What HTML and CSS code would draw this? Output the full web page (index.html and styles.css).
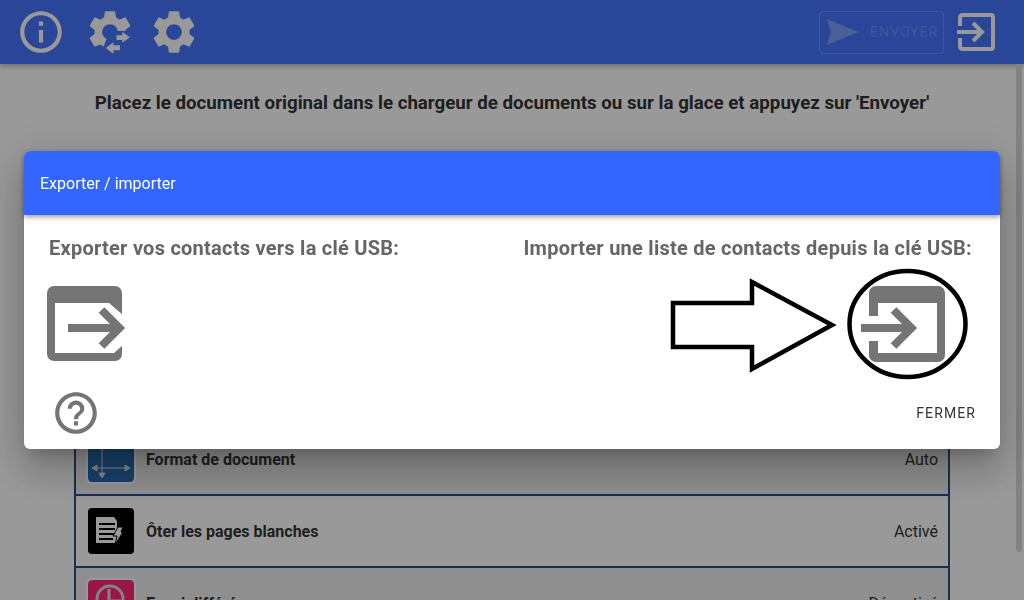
FILE: index.html
```html
<!DOCTYPE html>
<html lang="fr">
<head>
    <meta charset="UTF-8">
    <meta name="viewport" content="width=device-width, initial-scale=1.0">
    <title>Exporter / importer</title>
    <link rel="stylesheet" href="styles.css">
</head>
<body>
    <div class="app-header">
        <svg class="info-icon" viewBox="0 0 24 24"><path d="M11 7h2v2h-2zm0 4h2v6h-2zm1-9C6.48 2 2 6.48 2 12s4.48 10 10 10 10-4.48 10-10S17.52 2 12 2zm0 18c-4.41 0-8-3.59-8-8s3.59-8 8-8 8 3.59 8 8-3.59 8-8 8z"/></svg>
        <svg class="gear-icon" viewBox="84 6 52 52">
            <path transform="translate(84 6) scale(2.167)" d="M19.14 12.94c.04-.3.06-.61.06-.94 0-.32-.02-.64-.07-.94l2.03-1.58c.18-.14.23-.41.12-.61l-1.92-3.32c-.12-.22-.37-.29-.59-.22l-2.39.96c-.5-.38-1.03-.7-1.62-.94l-.36-2.54c-.04-.24-.24-.41-.48-.41h-3.84c-.24 0-.43.17-.47.41l-.36 2.54c-.59.24-1.13.57-1.62.94l-2.39-.96c-.22-.08-.47 0-.59.22L2.74 8.87c-.12.21-.08.47.12.61l2.03 1.58c-.05.3-.09.63-.09.94s.02.64.07.94l-2.03 1.58c-.18.14-.23.41-.12.61l1.92 3.32c.12.22.37.29.59.22l2.39-.96c.5.38 1.03.7 1.62.94l.36 2.54c.05.24.24.41.48.41h3.84c.24 0 .44-.17.47-.41l.36-2.54c.59-.24 1.13-.56 1.62-.94l2.39.96c.22.08.47 0 .59-.22l1.92-3.32c.12-.22.07-.47-.12-.61l-2.01-1.58zM12 15.6c-1.98 0-3.6-1.62-3.6-3.6s1.62-3.6 3.6-3.6 3.6 1.62 3.6 3.6-1.62 3.6-3.6 3.6z"/>
            <polygon class="gear-cut" points="106,40 116,31 136,31 136,58 104,58 104,46"/>
            <polygon class="swap-arrow" points="130,37.300 122.300,32 122.300,35.300 116.500,35.300 116.500,40 122.300,40 122.300,42.700"/>
            <polygon class="swap-arrow" points="105.700,48 113.300,42.300 113.300,45.300 120,45.300 120,50.300 113.300,50.300 113.300,53.700"/>
        </svg>
        <svg class="gear-icon" viewBox="0 0 24 24"><path d="M19.14 12.94c.04-.3.06-.61.06-.94 0-.32-.02-.64-.07-.94l2.03-1.58c.18-.14.23-.41.12-.61l-1.92-3.32c-.12-.22-.37-.29-.59-.22l-2.39.96c-.5-.38-1.03-.7-1.62-.94l-.36-2.54c-.04-.24-.24-.41-.48-.41h-3.84c-.24 0-.43.17-.47.41l-.36 2.54c-.59.24-1.13.57-1.62.94l-2.39-.96c-.22-.08-.47 0-.59.22L2.74 8.87c-.12.21-.08.47.12.61l2.03 1.58c-.05.3-.09.63-.09.94s.02.64.07.94l-2.03 1.58c-.18.14-.23.41-.12.61l1.92 3.32c.12.22.37.29.59.22l2.39-.96c.5.38 1.03.7 1.62.94l.36 2.54c.05.24.24.41.48.41h3.84c.24 0 .44-.17.47-.41l.36-2.54c.59-.24 1.13-.56 1.62-.94l2.39.96c.22.08.47 0 .59-.22l1.92-3.32c.12-.22.07-.47-.12-.61l-2.01-1.58zM12 15.6c-1.98 0-3.6-1.62-3.6-3.6s1.62-3.6 3.6-3.6 3.6 1.62 3.6 3.6-1.62 3.6-3.6 3.6z"/></svg>

        <div class="send-button">
            <svg class="send-icon" viewBox="0 0 31 26"><polygon points="0,0 31,13 0,26 4,13"/></svg>
            <span>ENVOYER</span>
        </div>
        <svg class="exit-icon" viewBox="0 0 38 38">
            <path d="M3 13V4.500A2.500 2.500 0 0 1 5.500 2H34.500A2 2 0 0 1 36 4V34A2 2 0 0 1 34.500 36H5.500A2.500 2.500 0 0 1 3 33.500V25"/>
            <path d="M0 19H25M16 10l9 9-9 9"/>
        </svg>
    </div>

    <p class="message">Placez le document original dans le chargeur de documents ou sur la glace et appuyez sur 'Envoyer'</p>

    <div class="settings-list">
        <div class="settings-row">
            <div class="row-icon icon-blue">
                <svg viewBox="0 0 46 46">
                    <path d="M4 32H42M14 5V42M4 32l5-3v6zM42 32l-5-3v6zM14 42l-3-5h6z"/>
                </svg>
            </div>
            <span class="row-label">Format de document</span>
            <span class="row-value">Auto</span>
        </div>
        <div class="settings-row">
            <div class="row-icon icon-black">
                <svg viewBox="0 0 46 46">
                    <polygon class="doc-sheet" points="8,9 26,9 29,13 29,35 8,35"/>
                    <path class="doc-lines" d="M11 16H27M11 21H27M11 26H27M11 31H25"/>
                    <polygon class="doc-bolt" points="30,19 35,19 33,24 35,24 27,37 29,28 25,28"/>
                </svg>
            </div>
            <span class="row-label">Ôter les pages blanches</span>
            <span class="row-value">Activé</span>
        </div>
        <div class="settings-row">
            <div class="row-icon icon-pink">
                <svg viewBox="0 0 46 46">
                    <circle cx="22" cy="19" r="13"/>
                    <path d="M21 9V21H33"/>
                </svg>
            </div>
            <span class="row-label">Envoi différé</span>
            <span class="row-value">Désactivé</span>
        </div>
    </div>

    <div class="scroll-thumb"></div>

    <!-- Export / import dialog -->
    <div class="overlay">
        <div class="dialog">
            <div class="dialog-header">Exporter / importer</div>
            <div class="dialog-titles">
                <span>Exporter vos contacts vers la clé USB:</span>
                <span>Importer une liste de contacts depuis la clé USB:</span>
            </div>
            <div class="dialog-icons">
                <svg class="export-icon" viewBox="0 0 80 76">
                    <rect x="0" y="0" width="75" height="75" rx="7"/>
                    <polygon class="cut" points="8,17 62,17 76,29 76,59 67,67 8,67"/>
                    <path class="arrow" d="M21 42H72M54.500 24l18 18-18 18"/>
                </svg>
                <svg class="import-icon" viewBox="0 0 85 76">
                    <rect x="8" y="0" width="76" height="76" rx="7"/>
                    <rect class="cut" x="17" y="17" width="59" height="50"/>
                    <rect class="cut" x="6" y="30" width="12" height="25"/>
                    <path class="arrow" d="M0 42H50M32.500 24l18 18-18 18"/>
                </svg>
            </div>
            <div class="dialog-footer">
                <svg class="help-icon" viewBox="0 0 24 24"><path d="M11 18h2v-2h-2v2zm1-16C6.480 2 2 6.480 2 12s4.480 10 10 10 10-4.480 10-10S17.520 2 12 2zm0 18c-4.410 0-8-3.590-8-8s3.590-8 8-8 8 3.590 8 8-3.590 8-8 8zm0-14c-2.210 0-4 1.790-4 4h2c0-1.100.9-2 2-2s2 .9 2 2c0 2-3 1.750-3 5h2c0-2.250 3-2.500 3-5 0-2.210-1.790-4-4-4z"/></svg>
                <span class="close-button">FERMER</span>
            </div>
            <!-- hand drawn arrow and circle on top of the dialog -->
            <svg class="annotation" viewBox="0 0 976 298">
                <polygon points="649,152 728,152 728,131 808,174 728,218 728,196 649,196"/>
                <ellipse cx="883.500" cy="173" rx="58" ry="53"/>
            </svg>
        </div>
    </div>
</body>
</html>
```

FILE: styles.css
```css
body {
    font-family: Roboto, "Liberation Sans", sans-serif;
    background-color: #fff;
    color: #333;
    margin: 0;
    height: 600px;
    overflow: hidden;
}

/* Top bar */
.app-header {
    display: flex;
    align-items: center;
    height: 64px;
    padding: 0 29px 0 16px;
    background-color: #4775ff;
    box-shadow: 0 2px 5px rgba(0,0,0,0.3);
}

.app-header svg {
    flex: none;
    fill: #fff;
}

.info-icon {
    width: 50px;
    height: 50px;
    margin-right: 18px;
}

.gear-icon {
    width: 52px;
    height: 52px;
    margin-right: 12px;
}

.gear-cut {
    fill: #4775ff;
}

.send-button {
    display: flex;
    align-items: center;
    box-sizing: border-box;
    width: 125px;
    height: 43px;
    margin-left: auto;
    padding-left: 7px;
    border: 1px solid rgba(255,255,255,0.2);
    border-radius: 4px;
    color: rgba(255,255,255,0.2);
    font-size: 14px;
    letter-spacing: 1px;
}

.app-header .send-icon {
    width: 31px;
    height: 26px;
    margin-right: 12px;
    fill: rgba(255,255,255,0.3);
}

.app-header .exit-icon {
    width: 38px;
    height: 38px;
    margin-left: 13px;
    fill: none;
    stroke: #fff;
    stroke-width: 4;
}

/* Page behind the dialog */
.message {
    margin: 0;
    padding-top: 28px;
    height: 334px;
    box-sizing: border-box;
    text-align: center;
    font-size: 18.72px;
    line-height: 22px;
    font-weight: 700;
}

.settings-list {
    width: 876px;
    margin: 26px 0 0 74px;
}

.settings-row {
    display: flex;
    align-items: center;
    box-sizing: border-box;
    height: 72px;
    padding: 0 10px 0 12px;
    border: solid #2a4f85;
    border-width: 0 2px 2px 2px;
    font-size: 16px;
}

.settings-row:nth-child(odd) {
    background-color: #eee;
}

.row-icon {
    flex: none;
    width: 46px;
    height: 46px;
    margin-right: 12px;
    border-radius: 4px;
}

.row-icon svg {
    display: block;
    width: 46px;
    height: 46px;
}

.icon-blue {
    background-color: #256cb0;
    outline: 2px solid #fff;
}

.icon-blue svg {
    fill: #ddd;
    stroke: #ddd;
    stroke-width: 1;
}

.icon-black {
    background-color: #000;
}

.doc-sheet {
    fill: #fff;
}

.doc-lines {
    stroke: #000;
    stroke-width: 2;
}

.doc-bolt {
    fill: #fff;
    stroke: #000;
    stroke-width: 1;
}

.icon-pink {
    background-color: #ff2579;
    outline: 2px solid #fff;
}

.icon-pink svg {
    fill: none;
    stroke: #ddd;
    stroke-width: 3;
}

.row-label {
    font-weight: 700;
}

.row-value {
    margin-left: auto;
}

.scroll-thumb {
    position: absolute;
    top: 64px;
    left: 1016px;
    width: 6px;
    height: 488px;
    border-radius: 3px;
    background-color: #d9d9d9;
}

/* Dialog */
.overlay {
    position: fixed;
    top: 0;
    left: 0;
    right: 0;
    bottom: 0;
    padding: 151px 24px 0;
    background-color: rgba(0,0,0,0.4);
}

.dialog {
    position: relative;
    height: 298px;
    background-color: #fff;
    border-radius: 6px;
    box-shadow: 0 11px 15px -7px rgba(0,0,0,0.2), 0 24px 38px 3px rgba(0,0,0,0.14), 0 9px 46px 8px rgba(0,0,0,0.12);
}

.dialog-header {
    height: 64px;
    padding-left: 16px;
    background-color: #3366ff;
    border-radius: 6px 6px 0 0;
    box-shadow: 0 2px 5px rgba(0,0,0,0.4);
    color: #fff;
    font-size: 16px;
    line-height: 65px;
}

.dialog-titles {
    display: flex;
    justify-content: space-between;
    padding: 22px 28px 0 25px;
    color: #666;
    font-size: 20px;
    letter-spacing: 0.25px;
    line-height: 22px;
    font-weight: 700;
}

.dialog-icons {
    display: flex;
    justify-content: space-between;
    margin-top: 27px;
    padding: 0 54px 0 23px;
}

.dialog-icons svg {
    height: 76px;
    overflow: visible;
    fill: #757575;
}

.export-icon {
    width: 80px;
}

.import-icon {
    width: 85px;
}

.dialog-icons .cut {
    fill: #fff;
}

.dialog-icons .arrow {
    fill: none;
    stroke: #757575;
    stroke-width: 8;
}

.dialog-footer {
    display: flex;
    justify-content: space-between;
    align-items: center;
    margin-top: 26px;
    padding: 0 24px 0 27px;
}

.help-icon {
    width: 50px;
    height: 50px;
    fill: #757575;
}

.close-button {
    font-size: 14px;
    letter-spacing: 1.1px;
    color: #333;
}

.annotation {
    position: absolute;
    top: 0;
    left: 0;
    width: 976px;
    height: 298px;
    fill: none;
    stroke: #000;
    stroke-width: 4.5;
    pointer-events: none;
}
```
